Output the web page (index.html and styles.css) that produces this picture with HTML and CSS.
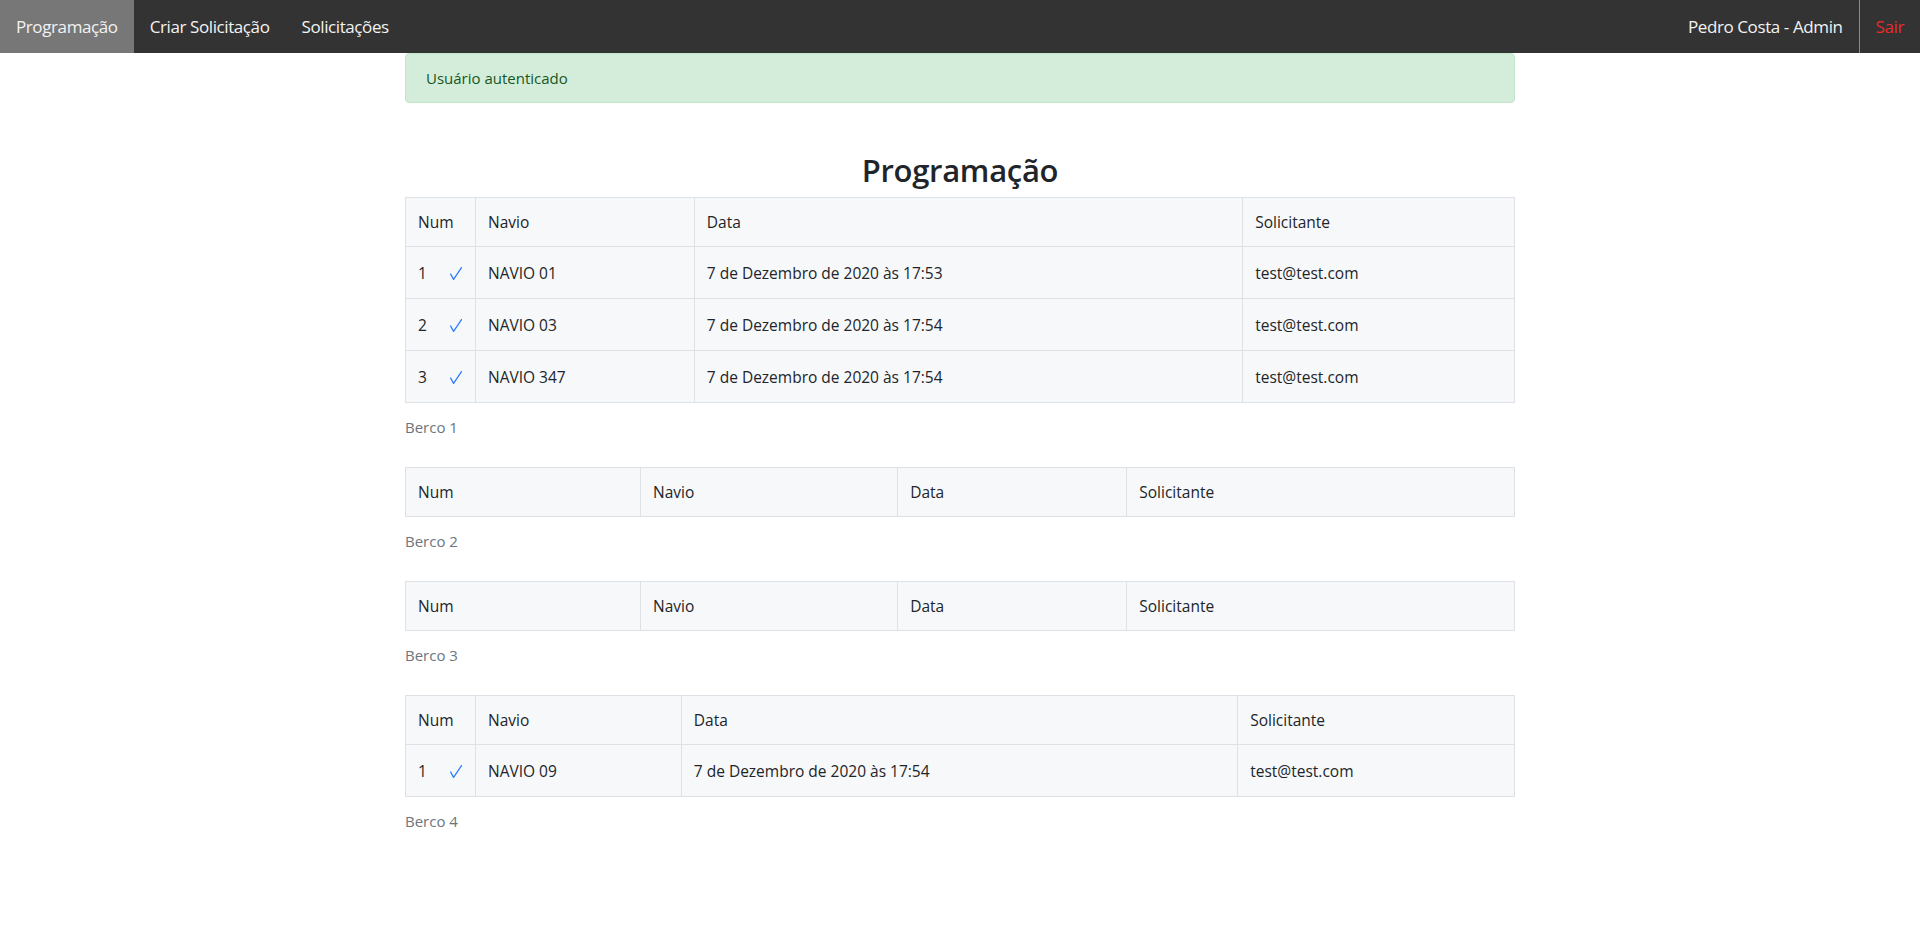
FILE: index.html
```html
<!DOCTYPE html>
<html lang="pt-BR">
<head>
<meta charset="utf-8">
<title>Programação</title>
<link rel="stylesheet" href="styles.css">
</head>
<body>
<nav class="topnav">
  <a class="nav-link active" href="#">Programação</a>
  <a class="nav-link" href="#">Criar Solicitação</a>
  <a class="nav-link" href="#">Solicitações</a>
  <div class="nav-right">
    <a class="nav-link" href="#">Pedro Costa - Admin</a>
    <a class="nav-link sair" href="#">Sair</a>
  </div>
</nav>
<main class="container">
  <div class="alert">Usuário autenticado</div>
  <h2 class="title">Programação</h2>

  <table class="table cols-a">
    <caption>Berco 1</caption>
    <thead>
      <tr><th class="c-num">Num</th><th class="c-navio">Navio</th><th class="c-data">Data</th><th class="c-sol">Solicitante</th></tr>
    </thead>
    <tbody>
      <tr>
        <td class="num"><span>1</span><svg class="check" viewBox="0 0 12 13" width="12" height="13"><polyline points="0.6,7 3.6,12.4 11.5,0.6"/></svg></td>
        <td>NAVIO 01</td><td>7 de Dezembro de 2020 às 17:53</td><td>test@test.com</td>
      </tr>
      <tr>
        <td class="num"><span>2</span><svg class="check" viewBox="0 0 12 13" width="12" height="13"><polyline points="0.6,7 3.6,12.4 11.5,0.6"/></svg></td>
        <td>NAVIO 03</td><td>7 de Dezembro de 2020 às 17:54</td><td>test@test.com</td>
      </tr>
      <tr>
        <td class="num"><span>3</span><svg class="check" viewBox="0 0 12 13" width="12" height="13"><polyline points="0.6,7 3.6,12.4 11.5,0.6"/></svg></td>
        <td>NAVIO 347</td><td>7 de Dezembro de 2020 às 17:54</td><td>test@test.com</td>
      </tr>
    </tbody>
  </table>

  <table class="table">
    <caption>Berco 2</caption>
    <thead>
      <tr><th>Num</th><th>Navio</th><th>Data</th><th>Solicitante</th></tr>
    </thead>
    <tbody></tbody>
  </table>

  <table class="table">
    <caption>Berco 3</caption>
    <thead>
      <tr><th>Num</th><th>Navio</th><th>Data</th><th>Solicitante</th></tr>
    </thead>
    <tbody></tbody>
  </table>

  <table class="table cols-b">
    <caption>Berco 4</caption>
    <thead>
      <tr><th class="c-num">Num</th><th class="c-navio">Navio</th><th class="c-data">Data</th><th class="c-sol">Solicitante</th></tr>
    </thead>
    <tbody>
      <tr>
        <td class="num"><span>1</span><svg class="check" viewBox="0 0 12 13" width="12" height="13"><polyline points="0.6,7 3.6,12.4 11.5,0.6"/></svg></td>
        <td>NAVIO 09</td><td>7 de Dezembro de 2020 às 17:54</td><td>test@test.com</td>
      </tr>
    </tbody>
  </table>
</main>
</body>
</html>
```

FILE: styles.css
```css
* { box-sizing: border-box; }

html, body {
  margin: 0;
  padding: 0;
}

body {
  font-family: "Open Sans", "Noto Sans", "Liberation Sans", sans-serif;
  font-size: 16px;
  line-height: 1.5;
  color: #212529;
  background: #fff;
}

.topnav {
  display: flex;
  background: #333333;
}

.nav-link {
  display: block;
  padding: 14px 16px;
  font-size: 17px;
  line-height: 25px;
  color: #f2f2f2;
  text-decoration: none;
  letter-spacing: -0.4px;
}

.nav-link.active {
  background: #777777;
}

.nav-right {
  display: flex;
  margin-left: auto;
}

.nav-link.sair {
  color: #ec2a2a;
  border-left: 1px solid #8a8a8a;
}

.container {
  width: 1110px;
  margin: 0 auto;
}

.alert {
  padding: 12px 20px;
  margin-bottom: 16px;
  border: 1px solid #c3e6cb;
  border-radius: 4px;
  background: #d4edda;
  color: #155724;
  font-size: 15px;
  line-height: 24px;
}

.title {
  margin: 49px 0 8px;
  font-size: 31px;
  font-weight: 600;
  line-height: 1.2;
  text-align: center;
  color: #212529;
  letter-spacing: -0.3px;
}

.table {
  width: 100%;
  margin-bottom: 16px;
  border-collapse: collapse;
  background: #f7f8fa;
  font-size: 15.5px;
}

.table caption {
  caption-side: bottom;
  text-align: left;
  padding: 12px 0;
  color: #6c757d;
  font-size: 15px;
  line-height: 24px;
}

.table th,
.table td {
  padding: 12px;
  border: 1px solid #dee2e6;
  text-align: left;
  font-weight: 400;
  line-height: 24px;
  vertical-align: middle;
}

.table tbody td {
  padding: 13.5px 12px;
}

.cols-a .c-num { width: 70px; }
.cols-a .c-navio { width: 219px; }
.cols-a .c-data { width: 549px; }
.cols-a .c-sol { width: 272px; }

.cols-b .c-num { width: 70px; }
.cols-b .c-navio { width: 206px; }
.cols-b .c-data { width: 557px; }
.cols-b .c-sol { width: 277px; }

.num {
  white-space: nowrap;
}

.check {
  margin-left: 23px;
  vertical-align: -1px;
}

.check polyline {
  fill: none;
  stroke: #2b7cff;
  stroke-width: 1.3;
  stroke-linecap: round;
  stroke-linejoin: round;
}
```
